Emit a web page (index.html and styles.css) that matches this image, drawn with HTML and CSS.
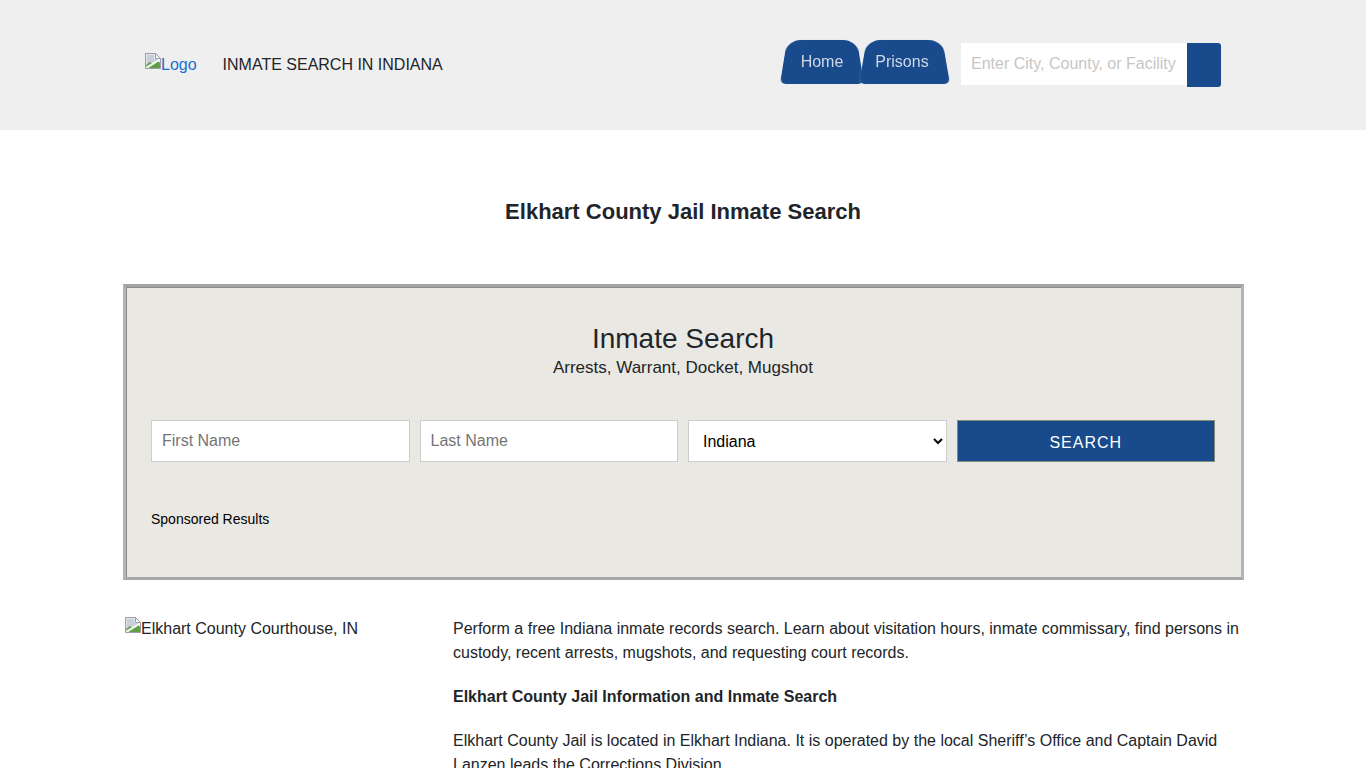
FILE: index.html
```html
<!DOCTYPE html>
<html lang="en">
<head>
<meta charset="utf-8">
<title>Elkhart County Jail Inmate Search</title>
<link rel="stylesheet" href="styles.css">
</head>
<body>
<header class="site-header">
  <div class="brand">
    <a class="logo" href="#"><svg class="broken" viewBox="0 0 16 16" width="16" height="16"><path d="M.5 .5H10.5L15.5 5.5V15.5H.5Z" fill="#e3e6ec" stroke="#9a9ea6"/><path d="M10.5 .5V5.5H15.5Z" fill="#fff" stroke="#9a9ea6"/><path d="M2 2H9V6H14V7L2 13Z" fill="#c9cfda"/><path d="M1 15V12L5 9L8 11L13 8L15 10V15Z" fill="#5f9e45"/><path d="M1 13.5L15 5.5V7.5L3.5 15H1Z" fill="#fff" opacity=".85"/></svg>Logo</a>
    <span class="site-name">INMATE SEARCH IN INDIANA</span>
  </div>
  <div class="tools">
    <nav class="nav">
      <a class="tab tab-home" href="#"><span>Home</span></a>
      <a class="tab tab-prisons" href="#"><span>Prisons</span></a>
    </nav>
    <form class="site-search">
      <input class="site-input" type="text" placeholder="Enter City, County, or Facility">
      <button class="site-btn" type="button" aria-label="Search"></button>
    </form>
  </div>
</header>
<main class="page">
  <h1 class="title">Elkhart County Jail Inmate Search</h1>
  <section class="search-box">
    <h2 class="box-title">Inmate Search</h2>
    <p class="box-sub">Arrests, Warrant, Docket, Mugshot</p>
    <form class="search-form">
      <input class="field" type="text" placeholder="First Name">
      <input class="field" type="text" placeholder="Last Name">
      <select class="field field-select"><option>Indiana</option></select>
      <button class="submit" type="button">SEARCH</button>
    </form>
    <p class="sponsored">Sponsored Results</p>
  </section>
  <section class="content">
    <div class="photo"><svg class="broken" viewBox="0 0 16 16" width="16" height="16"><path d="M.5 .5H10.5L15.5 5.5V15.5H.5Z" fill="#e3e6ec" stroke="#9a9ea6"/><path d="M10.5 .5V5.5H15.5Z" fill="#fff" stroke="#9a9ea6"/><path d="M2 2H9V6H14V7L2 13Z" fill="#c9cfda"/><path d="M1 15V12L5 9L8 11L13 8L15 10V15Z" fill="#5f9e45"/><path d="M1 13.5L15 5.5V7.5L3.5 15H1Z" fill="#fff" opacity=".85"/></svg>Elkhart County Courthouse, IN</div>
    <div class="copy">
      <p>Perform a free Indiana inmate records search. Learn about visitation hours, inmate commissary, find persons in custody, recent arrests, mugshots, and requesting court records.</p>
      <p class="strong">Elkhart County Jail Information and Inmate Search</p>
      <p>Elkhart County Jail is located in Elkhart Indiana. It is operated by the local Sheriff’s Office and Captain David Lanzen leads the Corrections Division.</p>
    </div>
  </section>
</main>
</body>
</html>
```
FILE: styles.css
```css
* { box-sizing: border-box; }
html, body { margin: 0; height: 768px; overflow: hidden; }
body { font-family: "Liberation Sans", Arial, sans-serif; font-size: 16px; line-height: 24px; color: #212529; background: #fff; }
.broken { flex: none; align-self: flex-start; }
.site-header { height: 130px; background: #efefef; display: flex; justify-content: space-between; padding: 40px 145px 0; }
.brand { display: flex; height: 50px; align-items: center; }
.logo { display: flex; align-items: flex-start; color: #1a6fd0; text-decoration: none; line-height: 24px; margin-right: 26px; }
.site-name { color: #212529; }
.tools { display: flex; align-items: flex-start; }
.nav { display: flex; margin-right: 11px; }
.tab { position: relative; height: 44px; display: flex; align-items: center; justify-content: center; color: #cfd8e6; text-decoration: none; z-index: 0; }
.tab::before { content: ""; position: absolute; inset: -13px 0 0; background: #184a8c; border-radius: 18px 18px 6px 6px; transform: perspective(100px) rotateX(21deg); transform-origin: bottom; z-index: -1; box-shadow: 0 0 1px #b8d0ea; }
.tab-home { width: 84px; }
.tab-prisons { width: 91px; margin-left: -5px; padding-right: 5px; }
.site-search { display: flex; align-items: flex-start; margin-top: 3px; }
.site-input { width: 226px; height: 42px; border: 0; background: #fff; padding: 0 10px; font: 16px "Liberation Sans", Arial, sans-serif; outline: 0; }
.site-input::placeholder { color: #c6c6c6; opacity: 1; }
.site-btn { width: 34px; height: 44px; border: 0; padding: 0; background: #184a8c; border-radius: 0 3px 3px 0; }
.page { width: 1120px; margin: 0 auto; }
.title { margin: 0; padding-top: 69px; height: 154px; text-align: center; font-size: 22px; line-height: 26px; font-weight: 700; color: #212529; }
.search-box { width: 1121px; height: 296px; background: #eae8e2; border: 3px solid #b4b4b4; border-top-color: #a4a4a4; border-bottom-color: #a8a8a8; padding: 35px 26px 0 25px; text-align: center; box-shadow: inset 1px 1px 0 #8e8e8e; }
.box-title { margin: 0; font-size: 28px; line-height: 34px; font-weight: 400; }
.box-sub { margin: 0; font-size: 17px; line-height: 24px; }
.search-form { display: grid; grid-template-columns: repeat(4, 1fr); gap: 10px; margin-top: 40px; }
.field { width: 100%; height: 42px; border: 1px solid #cdcdcd; background: #fff; padding: 0 10px; font: 16px "Liberation Sans", Arial, sans-serif; color: #000; outline: 0; border-radius: 0; }
.field::placeholder { color: #757575; opacity: 1; }
.submit { width: 100%; height: 42px; border: 1px solid #7f8a78; background: #184a8c; color: #fff; font: 16px "Liberation Sans", Arial, sans-serif; letter-spacing: 1px; padding: 4px 0 0; }
.sponsored { margin: 45px 0 0; text-align: left; font-size: 14px; line-height: 24px; color: #000; }
.content { display: flex; margin-top: 37px; padding-left: 2px; }
.photo { width: 328px; flex: none; display: flex; }
.copy { flex: 1; }
.copy p { margin: 0 0 20px; }
.copy .strong { font-weight: 700; }
```
